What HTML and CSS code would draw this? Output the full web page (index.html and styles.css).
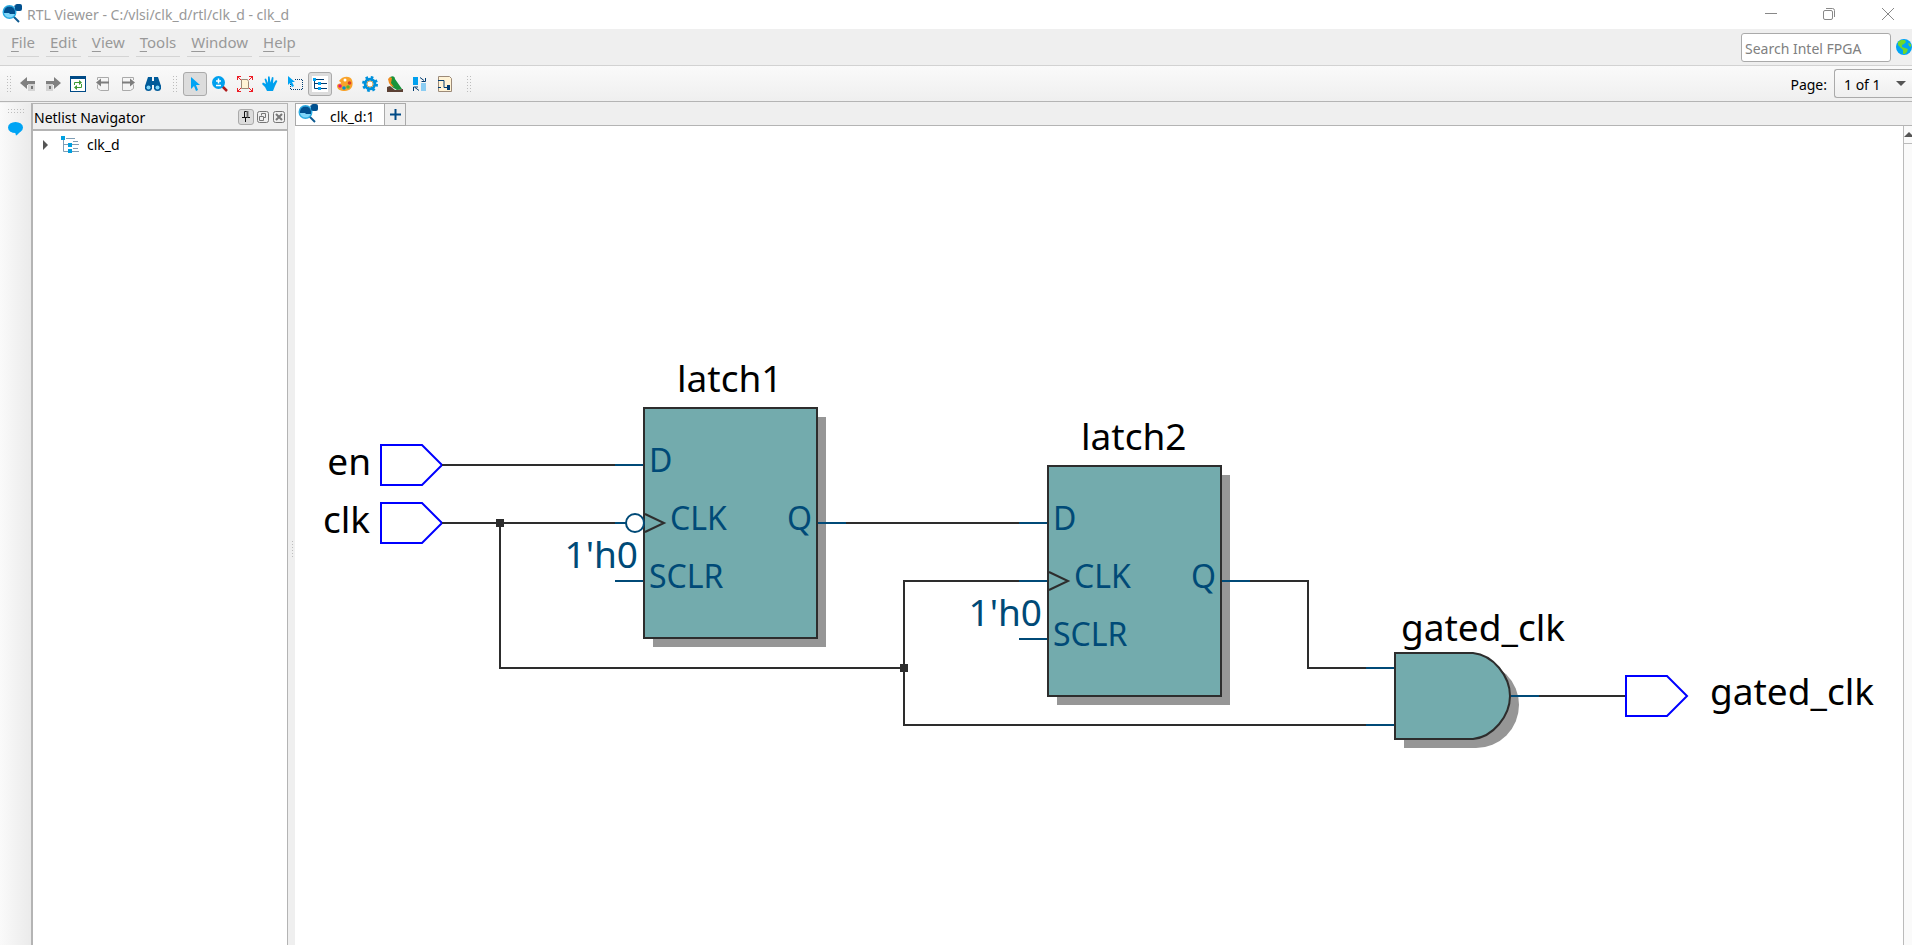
FILE: index.html
```html
<!DOCTYPE html>
<html lang="en">
<head>
<meta charset="utf-8">
<title>RTL Viewer - C:/vlsi/clk_d/rtl/clk_d - clk_d</title>
<link rel="stylesheet" href="styles.css">
</head>
<body>
<svg class="defs" aria-hidden="true">
  <defs>
    <symbol id="app-logo" viewBox="0 0 20 20">
      <path d="M11 12l6 6" stroke="#0d5a91" stroke-width="2"/>
      <circle cx="7.500" cy="8" r="7" fill="#29abe2"/>
      <circle cx="7.500" cy="8" r="5.600" fill="#7fd6fa"/>
      <path d="M2 7a5.600 5.600 0 0 1 11 0v3H8l-1-1H2z" fill="#00508f"/>
      <path d="M12 2l4 1" stroke="#00508f" stroke-width="1"/>
      <rect x="13" y="0" width="7" height="7" rx="2" fill="#00508f"/>
    </symbol>
    <symbol id="latch" overflow="visible">
      <rect x="9" y="9" width="173" height="230" class="shadow"/>
      <rect x="0" y="0" width="173" height="230" class="body"/>
      <path d="M1 106l19 9l-19 9" class="wire"/>
      <path d="M-29 57H-1M-29 173H-1M174 115h28" class="stub"/>
      <text x="5" y="64" class="port">D</text>
      <text x="26" y="122" class="port">CLK</text>
      <text x="5" y="180" class="port">SCLR</text>
      <text x="143" y="122" class="port">Q</text>
      <text x="-6" y="160" class="const">1'h0</text>
    </symbol>
  </defs>
</svg>

<header class="titlebar">
  <svg class="logo"><use href="#app-logo"/></svg>
  <h1 class="title">RTL Viewer - C:/vlsi/clk_d/rtl/clk_d - clk_d</h1>
  <div class="win-buttons">
    <button class="win" aria-label="Minimize"><svg width="12" height="12"><path d="M0 5.500h12"/></svg></button>
    <button class="win" aria-label="Restore"><svg width="12" height="12"><rect x=".5" y="2.500" width="9" height="9" rx="1.500"/><path d="M3 .5h6.500a2 2 0 0 1 2 2V9"/></svg></button>
    <button class="win" aria-label="Close"><svg width="12" height="12"><path d="M0 0l12 12M12 0L0 12"/></svg></button>
  </div>
</header>

<div class="menubar">
  <nav class="menus">
    <button class="menu"><u>F</u>ile</button>
    <button class="menu"><u>E</u>dit</button>
    <button class="menu"><u>V</u>iew</button>
    <button class="menu"><u>T</u>ools</button>
    <button class="menu"><u>W</u>indow</button>
    <button class="menu"><u>H</u>elp</button>
  </nav>
  <input class="search" type="text" placeholder="Search Intel FPGA" aria-label="Search Intel FPGA">
  <button class="globe" aria-label="Search the web">
    <svg width="16" height="16"><circle cx="8" cy="8" r="8" fill="#00a4f4"/><path d="M2 3l3-2 4 0 1 2-2 2-2 1v2l3 1 3 1-1 3-2 2-2 0 0-4-3-3-2-2zM12 4l3 1 0 3-2-1z" fill="#6fd72a"/></svg>
  </button>
</div>

<div class="toolbar">
  <i class="grip"></i>
  <div class="tools nav-tools">
    <button class="tool" aria-label="Back"><svg width="16" height="16"><path d="M0 7l7-6v4h8v4H7v4z" fill="#808080"/><rect x="8" y="8" width="7" height="7" fill="#d4d4d4"/><rect x="11" y="10" width="2" height="3" fill="#777"/></svg></button>
    <button class="tool" aria-label="Forward"><svg width="16" height="16"><path d="M16 7L9 1v4H1v4h8v4z" fill="#808080"/><rect x="1" y="8" width="7" height="7" fill="#d4d4d4"/><rect x="4" y="10" width="2" height="3" fill="#777"/></svg></button>
    <button class="tool" aria-label="Refresh"><svg width="16" height="16"><rect x=".5" y=".5" width="15" height="15" fill="#fff" stroke="#004a86"/><path d="M0 0h16v3H0z" fill="#004a86"/><path d="M4.500 9V6.500H9M11.500 8v3.500H7" fill="none" stroke="#3f9b35"/><path d="M9 4l3 2.500-3 2.500zM7 9l-3 2.500 3 2.500z" fill="#3f9b35"/></svg></button>
    <button class="tool" aria-label="Previous page"><svg width="16" height="16"><path d="M2.500 4V1.500h11V14.500H5.500L2.500 12.500V8.500" fill="none" stroke="#aaa"/><path d="M1 6.500l5-4v3h8v2H6v3z" fill="#7d7d7d"/></svg></button>
    <button class="tool" aria-label="Next page"><svg width="16" height="16"><path d="M13.500 4V1.500h-11V14.500h8l3-2V8.500" fill="none" stroke="#aaa"/><path d="M15 6.500l-5-4v3H2v2h8v3z" fill="#7d7d7d"/></svg></button>
    <button class="tool" aria-label="Find"><svg width="16" height="16"><path d="M3 1h4v4h2V1h4l3 9v3H9V9H7v4H0v-3z" fill="#005b9a"/><circle cx="3.500" cy="11.500" r="3.500" fill="#005b9a"/><circle cx="12.500" cy="11.500" r="3.500" fill="#005b9a"/><circle cx="3.500" cy="11.500" r="2" fill="#7fd6fa"/><circle cx="12.500" cy="11.500" r="2" fill="#7fd6fa"/></svg></button>
  </div>
  <i class="grip"></i>
  <div class="tools main-tools">
    <button class="tool on" aria-label="Select"><svg width="16" height="16"><path d="M4 1v12l3-3 2 5 2-1-2-5h4z" fill="#00a4f4"/></svg></button>
    <button class="tool" aria-label="Zoom"><svg width="16" height="16"><path d="M10 10l5 5" stroke="#b01c1c" stroke-width="2.500"/><circle cx="6.500" cy="6.500" r="6.500" fill="#00a0ee"/><path d="M4 5h5M6.500 2.500v5M4 9.500h5" stroke="#fff" stroke-width="1.500"/></svg></button>
    <button class="tool" aria-label="Fit in window"><svg width="16" height="16"><path d="M4.500 3.500h6l1 2v7h-7z" fill="#fff3d6" stroke="#9c8a78"/><path d="M0 0l4 4M16 0l-4 4M0 16l4-4M16 16l-4-4" stroke="#ee1c25"/><path d="M.5 4V.5H4M12 .5h3.500V4M.5 12v3.500H4M12 15.500h3.500V12" fill="none" stroke="#ee1c25"/></svg></button>
    <button class="tool" aria-label="Pan"><svg width="16" height="16"><path d="M5 15l-2-4-3-3 1-1.500L4 8 2.500 3 4 2.500 6 7 6 .5h1.600L8.500 6.500 10 1l1.500 .5L11 7.500 14 4l1.400 1L13 10l-2 5z" fill="#00a0ee"/></svg></button>
    <button class="tool" aria-label="Area select"><svg width="16" height="16"><path d="M3.500 8v5.500h12v-10H8" fill="none" stroke="#003c71" stroke-dasharray="1 1"/><path d="M1 0v9l2-2 2 4 2-1-2-4h3z" fill="#00a4f4"/></svg></button>
    <button class="tool on" aria-label="Netlist navigator"><svg width="16" height="16"><rect width="16" height="16" fill="#fff"/><path d="M2.500 3v9.500H15M2 3.500h10M3 7.500h12" fill="none" stroke="#003c71"/><path d="M1 2h3v3H1zM6 6h3v3H6zM6 11h3v3H6z" fill="#00a4f4"/></svg></button>
    <button class="tool" aria-label="Colors"><svg width="16" height="16"><path d="M2 5c3-5 11-6 13-1 2 6-1 11-7 11-5 0-8-2-8-5s4-2 4-3-1-1-2-2z" fill="#f9a32b"/><circle cx="8" cy="4" r="1.500" fill="#fff"/><circle cx="3" cy="10" r="1.800" fill="#e3177a"/><circle cx="7" cy="12" r="1.800" fill="#0091d5"/><circle cx="11" cy="11" r="1.800" fill="#5cb531"/><circle cx="12.500" cy="7" r="1.800" fill="#d83b2b"/></svg></button>
    <button class="tool" aria-label="Settings"><svg width="16" height="16"><circle cx="8" cy="8" r="6.500" fill="none" stroke="#0091dc" stroke-width="3" stroke-dasharray="2.500 2.600"/><circle cx="8" cy="8" r="4.800" fill="#fff" stroke="#0091dc" stroke-width="3"/><circle cx="8" cy="8" r="3" fill="#fff" stroke="#d8a65a" stroke-width="1"/></svg></button>
    <button class="tool" aria-label="Bird's eye view"><svg width="16" height="16"><path d="M0 11l3-1 5 4 8-1v3H0z" fill="#5b4034"/><path d="M2 3c2-4 6-3 6 0l7 10-5 1-5-3-2-4z" fill="#17943a"/><path d="M1 3l2-2 2 1-1 5 3 4-3-1-2-3z" fill="#f08a1d"/></svg></button>
    <button class="tool" aria-label="Swap hierarchy"><svg width="16" height="16"><rect x="1" y="1" width="5" height="8" fill="#00a0ee"/><rect x="9" y="7" width="5" height="8" fill="#8bcdf3"/><path d="M8 1.500l4 3M9.500 5.500h4V2M7 14.500l-4-3M1.500 15v-4H6" fill="none" stroke="#003c71"/></svg></button>
    <button class="tool" aria-label="Export schematic"><svg width="16" height="16"><path d="M1.500 .5h11l2 2v13h-13z" fill="#fff3d6" stroke="#9c8a78"/><path d="M1 4.500h6v7h4M1 11.500h3" fill="none" stroke="#003c71"/><path d="M10 9h3v5h-3z" fill="#003c71"/></svg></button>
  </div>
  <i class="grip"></i>
  <div class="page-picker">
    <label for="page">Page:</label>
    <div class="combo">
      <select id="page"><option>1 of 1</option></select>
      <svg class="combo-arrow" width="10" height="5"><path d="M0 0h10L5 5z" fill="#555"/></svg>
    </div>
  </div>
</div>

<main class="workspace">
  <aside class="strip">
    <i class="grip-h"></i>
    <button class="bubble" aria-label="Messages"><svg width="15" height="14"><ellipse cx="7.500" cy="5.500" rx="7.500" ry="5.500" fill="#00a4f4"/><path d="M7 10h5l-3 3-1 .5z" fill="#00a4f4"/></svg></button>
  </aside>

  <section class="navigator">
    <header class="nav-head">
      <h2 class="nav-title">Netlist Navigator</h2>
      <button class="dock pinned" aria-label="Pin"><svg width="8" height="11"><path d="M2.500 6V.5h3V6M0 6.500h8M3.500 7v4" fill="none" stroke="#111"/><path d="M5 0h1v6H5z" fill="#111"/></svg></button>
      <button class="dock" aria-label="Float"><svg width="12" height="12"><rect x=".5" y=".5" width="11" height="11" rx="2"/><path d="M4.500 4.500v-2h4v4h-2M2.500 5.500h4v4h-4z"/></svg></button>
      <button class="dock" aria-label="Close panel"><svg width="12" height="12"><rect x=".5" y=".5" width="11" height="11" rx="2"/><path d="M3 3l6 6M9 3l-6 6" stroke-width="2"/></svg></button>
    </header>
    <div class="tree" role="tree">
      <div class="node" role="treeitem" aria-expanded="false">
        <svg class="twist" width="5" height="10"><path d="M0 0l5 5-5 5z" fill="#555"/></svg>
        <svg width="19" height="18"><path d="M2.500 3v12.500H18M5 2.500h9M3 8.500h15M12 5.500h5M12 12.500h5" fill="none" stroke="#7d9db5"/><path d="M0 0h4v4H0zM7 7h4v4H7zM7 13h4v4H7z" fill="#00a0e0"/></svg>
        <span>clk_d</span>
      </div>
    </div>
  </section>

  <div class="splitter"><i class="grip-v"></i></div>

  <section class="editor">
    <div class="tabs">
      <button class="tab"><svg class="logo"><use href="#app-logo"/></svg><span>clk_d:1</span></button>
      <button class="add" aria-label="New tab"><svg width="11" height="11"><path d="M5.500 0v11M0 5.500h11" stroke="#004a86" stroke-width="2"/></svg></button>
    </div>
    <div class="view">
      <svg class="schematic" role="img" aria-label="Schematic of clk_d">
        <g transform="translate(-295 -126)">
          <path class="pin" d="M381 445h41l20 20-20 20h-41z"/>
          <path class="pin" d="M381 503h41l20 20-20 20h-41z"/>
          <text x="371" y="475" class="label end">en</text>
          <text x="370" y="533" class="label end">clk</text>

          <path class="wire" d="M442 465H615M442 523H615M500 523V668H904M846 523H1019M1019 581H904V725H1366M1250 581H1308V668H1366M1539 696H1626"/>
          <path class="dot" d="M496 519h8v8h-8zM900 664h8v8h-8z"/>
          <path class="stub" d="M615 465H643M615 523H627M1019 581H1047M1366 668H1394M1366 725H1394"/>

          <text x="677" y="392" class="label">latch1</text>
          <use href="#latch" x="644" y="408"/>
          <circle cx="635" cy="523" r="9" class="bubble-pin"/>

          <text x="1081" y="450" class="label">latch2</text>
          <use href="#latch" x="1048" y="466"/>

          <text x="1401" y="641" class="label">gated_clk</text>
          <path class="shadow" d="M1404 662h72a43 43 0 0 1 0 86h-72z"/>
          <path class="body" d="M1395 653h78c20 2 37 23 37 43s-17 41-37 43h-78z"/>
          <path class="stub" d="M1511 696H1539"/>
          <path class="pin" d="M1626 676h41l20 20-20 20h-41z"/>
          <text x="1710" y="705" class="label">gated_clk</text>
        </g>
      </svg>
      <div class="scrollbar"><button class="scroll-up" aria-label="Scroll up"><svg width="8" height="5"><path d="M0 5l5-5 5 5z" fill="#555"/></svg></button></div>
    </div>
  </section>
</main>
</body>
</html>
```

FILE: styles.css
```css
* { box-sizing: border-box; }

body {
  margin: 0;
  height: 100vh;
  display: flex;
  flex-direction: column;
  overflow: hidden;
  background: #efefef;
  color: #000;
  font: 15px/20px "Noto Sans", sans-serif;
}

button, input, select {
  margin: 0;
  padding: 0;
  border: 0;
  background: none;
  color: inherit;
  font: inherit;
}

h1, h2 { margin: 0; font: inherit; }
svg { display: block; flex: none; }
.defs { position: absolute; width: 0; height: 0; }
.logo { width: 20px; height: 20px; }

/* Title bar */
.titlebar {
  display: flex;
  align-items: center;
  gap: 5px;
  height: 29px;
  padding: 0 0 2px 2px;
  background: #fff;
  color: #999;
}
.title { flex: 1; padding-top: 2px; font-size: 14px; }
.win-buttons { display: flex; }
.win { width: 58px; height: 26px; display: grid; place-items: center; }
.win:last-child { width: 48px; margin-left: 6px; padding-right: 0; }
.win svg { fill: none; stroke: #888; }

/* Menu bar */
.menubar {
  display: flex;
  align-items: center;
  gap: 5px;
  height: 37px;
  border-bottom: 1px solid #d2d2d2;
}
.menus { flex: 1; display: flex; gap: 7px; padding: 0 0 6px 7px; }
.menu {
  height: 26px;
  padding: 0 4px 4px;
  border-bottom: 1px solid #d4d4d4;
  color: #999;
}
.menu u { text-underline-offset: 3px; }
.search {
  width: 150px;
  height: 29px;
  padding: 2px 3px 0;
  border: 1px solid #aaa;
  border-radius: 3px;
  background: #fff;
  font-size: 14px;
}
.search::placeholder { color: #808080; opacity: 1; }

/* Toolbar */
.toolbar {
  display: flex;
  align-items: center;
  height: 36px;
  padding-left: 6px;
  border-bottom: 1px solid #b4b4b4;
  background: linear-gradient(#fafafa, #efefef);
}
.grip, .grip-h, .grip-v {
  background: radial-gradient(circle, #bdbdbd 1px, transparent 1px) 0 0 / 3px 3px;
}
.grip { width: 5px; height: 17px; }
.tools { display: flex; gap: 1px; }
.nav-tools { padding: 0 7px 0 5px; }
.main-tools { padding: 0 9px 0 6px; }
.tool {
  width: 24px;
  height: 24px;
  display: grid;
  place-items: center;
  border: 1px solid transparent;
  border-radius: 3px;
}
.tool.on { border-color: #aaa; background: #dcdcdc; }
.page-picker { margin-left: auto; display: flex; align-items: center; gap: 7px; font-size: 14px; }
.page-picker label { padding-top: 2px; }
.combo { display: grid; align-items: center; width: 78px; }
.combo > * { grid-area: 1 / 1; }
.combo select {
  height: 29px;
  padding: 3px 28px 0 9px;
  border: 1px solid #aaa;
  border-right: 0;
  border-radius: 3px 0 0 3px;
  background: linear-gradient(#fbfbfb, #efefef);
  appearance: none;
}
.combo-arrow { justify-self: end; margin-right: 6px; pointer-events: none; }

/* Workspace */
.workspace { flex: 1; min-height: 0; display: flex; padding-top: 1px; }
.strip {
  width: 31px;
  display: flex;
  flex-direction: column;
  align-items: center;
  gap: 9px;
  padding-top: 5px;
  background: linear-gradient(90deg, #fafafa, #ebebeb);
}
.grip-h { width: 17px; height: 5px; }
.navigator {
  width: 257px;
  display: flex;
  flex-direction: column;
  border: solid #b4b4b4;
  border-width: 1px 1px 0 2px;
  background: #fff;
}
.nav-head {
  display: flex;
  align-items: center;
  gap: 2px;
  height: 27px;
  padding: 0 1px;
  border-bottom: 2px solid #b4b4b4;
  background: #efefef;
  font-size: 14px;
}
.nav-title { flex: 1; padding-top: 3px; }
.dock { width: 14px; height: 16px; display: grid; place-items: center; }
.dock svg { fill: none; stroke: #777; }
.pinned { width: 16px; border: 1px solid #aaa; border-radius: 3px; background: #dcdcdc; }
.tree { padding: 4px 0 0 10px; font-size: 14px; }
.node { display: flex; align-items: center; gap: 7px; height: 20px; }
.twist { margin-right: 6px; }
.splitter {
  width: 7px;
  display: grid;
  align-content: center;
  justify-content: end;
  padding: 50px 1px 0 0;
}
.grip-v { width: 3px; height: 18px; }

/* Schematic tabs and canvas */
.editor { flex: 1; min-width: 0; display: flex; flex-direction: column; }
.tabs {
  display: flex;
  height: 23px;
  border-bottom: 1px solid #b4b4b4;
}
.tab, .add { display: flex; align-items: center; border: 1px solid #aaa; height: 23px; }
.tab { gap: 12px; padding: 0 10px 0 2px; background: #fff; font-size: 14px; }
.tab .logo { align-self: start; }
.tab span { padding-top: 4px; }
.add { width: 21px; border-left: 0; justify-content: center; }
.view { flex: 1; min-height: 0; display: flex; background: #fff; }
.schematic { flex: 1; min-width: 0; height: 100%; }
.scrollbar { width: 9px; border-left: 1px solid #bbb; background: #fafafa; overflow: hidden; }
.scroll-up { width: 100%; height: 18px; display: grid; place-items: center end; border-bottom: 1px solid #bbb; }

/* Schematic symbols */
.wire { fill: none; stroke: #2d2d2d; stroke-width: 2; }
.stub { fill: none; stroke: #004a77; stroke-width: 2; }
.pin { fill: none; stroke: #00f; stroke-width: 2; }
.dot { fill: #2d2d2d; }
.body { fill: #73abad; stroke: #2d2d2d; stroke-width: 2; }
.shadow { fill: #969696; }
.bubble-pin { fill: #fff; stroke: #004a77; stroke-width: 2; }
.label { font-size: 37px; }
.port { font-size: 32px; fill: #004a77; }
.const { font-size: 37px; fill: #004a77; text-anchor: end; }
.end { text-anchor: end; }
```
